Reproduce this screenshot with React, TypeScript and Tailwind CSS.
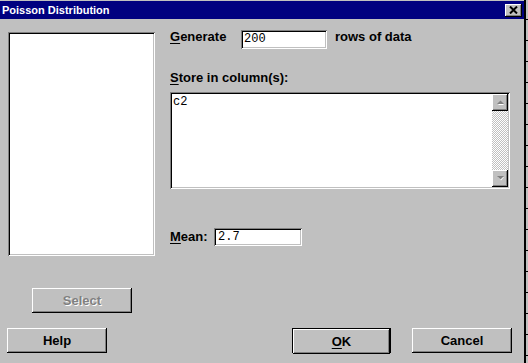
import React from 'react'

const font = "font-['Liberation_Sans',Arial,sans-serif]"
const mono = "font-['Liberation_Mono','Courier_New',monospace]"

const sunken =
  'bg-white shadow-[inset_1px_1px_0_#808080,inset_-1px_-1px_0_#fff,inset_2px_2px_0_#000,inset_-2px_-2px_0_#c0c0c0]'
const raised =
  'bg-[#c0c0c0] shadow-[inset_-1px_-1px_0_#000,inset_1px_1px_0_#fff,inset_-2px_-2px_0_#808080]'

function Btn({ children, className = '' }: { children: React.ReactNode; className?: string }) {
  return (
    <div className={`flex h-[25px] items-center justify-center text-[13px] font-bold leading-[14px] text-black ${raised} ${className}`}>
      {children}
    </div>
  )
}

function Arrow({ up }: { up?: boolean }) {
  return (
    <div className={`flex h-[17px] w-[16px] items-center justify-center ${raised}`}>
      <svg width="7" height="5" viewBox="0 0 7 5">
        {up ? (
          <>
            <polygon points="1,5 4,2 7,5" fill="#fff" />
            <polygon points="0,4 3.5,0.5 7,4" fill="#808080" />
          </>
        ) : (
          <>
            <polygon points="1,1 4,4.5 7,1" fill="#fff" />
            <polygon points="0,0 3.5,3.5 7,0" fill="#808080" />
          </>
        )}
      </svg>
    </div>
  )
}

export default function App() {
  return (
    <div className={`flex h-[363px] w-[528px] overflow-hidden bg-[#c0c0c0] ${font}`}>
      <div className="flex w-[524px] flex-col">
        {/* title bar */}
        <div className="mt-[1px] flex h-[18px] items-center justify-between bg-[#000080] pl-[2px] pr-[2px]">
          <span className="text-[11px] font-bold leading-[12px] text-white">Poisson Distribution</span>
          <div className={`flex h-[13px] w-[17px] items-center justify-center ${raised}`}>
            <svg width="9" height="8" viewBox="0 0 9 8">
              <path d="M1 0.5 L8 7.5 M8 0.5 L1 7.5" stroke="#000" strokeWidth="2" />
            </svg>
          </div>
        </div>

        <div className="flex">
          {/* left column */}
          <div className="flex w-[155px] flex-col pl-[8px]">
            <div className={`mt-[13px] h-[224px] w-[147px] ${sunken}`} />
            <Btn className="ml-[24px] mt-[32px] w-[100px]">
              <span className="text-[#808080] [text-shadow:1px_1px_0_#fff]">Select</span>
            </Btn>
          </div>

          {/* right column */}
          <div className="ml-[15px] flex w-[340px] flex-col text-[13px] font-bold text-black">
            <div className="mt-[11px] flex h-[19px] items-start">
              <span className="w-[71px] leading-[14px]">
                <u className="underline-offset-2">G</u>enerate
              </span>
              <div className={`h-[19px] w-[86px] pl-[3px] pt-[3px] text-[12px] font-normal leading-[13px] ${mono} ${sunken}`}>
                200
              </div>
              <span className="ml-[8px] leading-[14px]">rows of data</span>
            </div>

            <div className="mt-[21px] h-[16px] leading-[16px]">
              <u className="underline-offset-2">S</u>tore in column(s):
            </div>

            <div className={`mt-[6px] flex h-[97px] w-[340px] p-[2px] ${sunken}`}>
              <div className={`flex-1 pl-[1px] pt-[2px] text-[12px] font-normal leading-[13px] ${mono}`}>c2</div>
              <div className="flex w-[16px] flex-col bg-[image:repeating-conic-gradient(#c0c0c0_0_25%,#fff_0_50%)] bg-[length:2px_2px]">
                <Arrow up />
                <div className="flex-1" />
                <Arrow />
              </div>
            </div>

            <div className="mt-[39px] flex h-[18px] items-center">
              <span className="w-[44px] leading-[14px]">
                <u className="underline-offset-2">M</u>ean:
              </span>
              <div className={`h-[18px] w-[88px] pl-[4px] pt-[3px] text-[12px] font-normal leading-[13px] ${mono} ${sunken}`}>
                2.7
              </div>
            </div>
          </div>
        </div>

        {/* bottom buttons */}
        <div className="mt-[15px] flex">
          <Btn className="ml-[7px] w-[100px]">Help</Btn>
          <div className="ml-[185px] h-[25px] w-[99px] border border-black">
            <Btn className="h-[23px] w-full">
              <span>
                <u className="underline-offset-2">O</u>K
              </span>
            </Btn>
          </div>
          <Btn className="ml-[21px] w-[100px]">Cancel</Btn>
        </div>
      </div>

      {/* edge of the worksheet behind the dialog */}
      <div className="flex w-[4px]">
        <div className="w-[2px] bg-black" />
        <div className="w-[2px] bg-[image:repeating-linear-gradient(to_bottom,transparent_0_19px,#000_19px_20px,transparent_20px_21px)]" />
      </div>
    </div>
  )
}
